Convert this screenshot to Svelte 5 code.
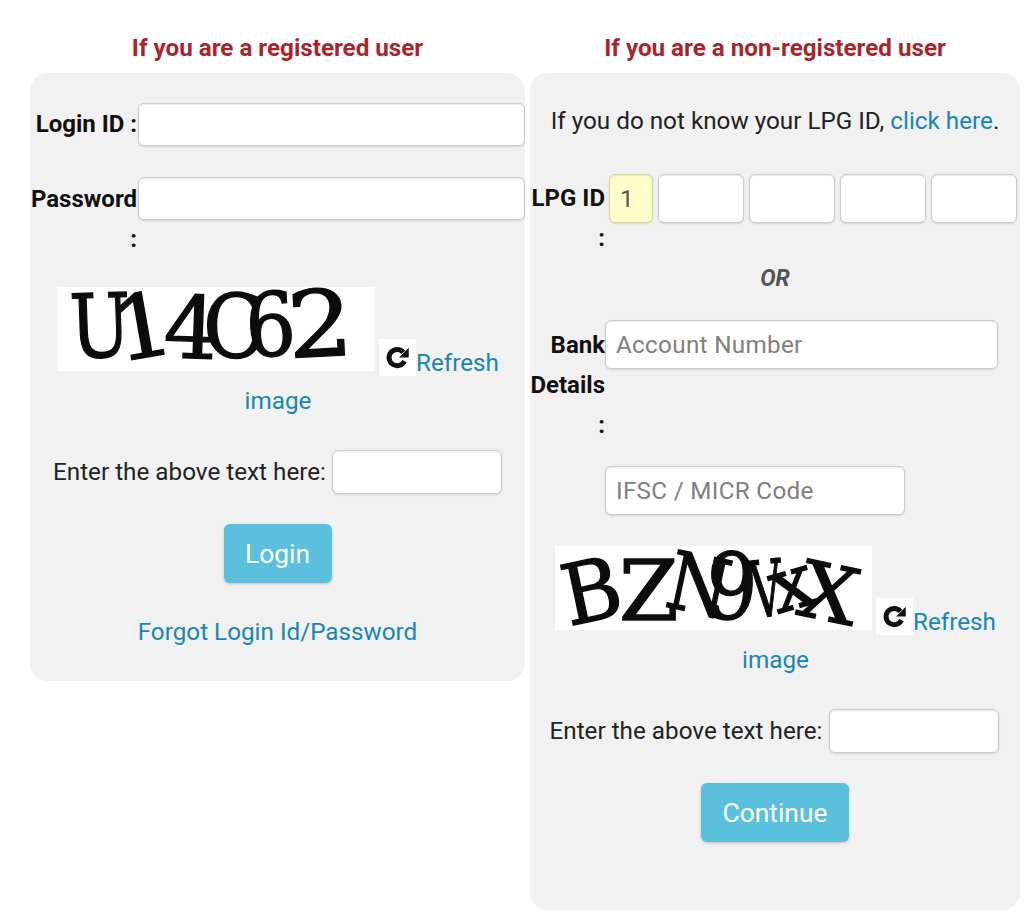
<script>
  const lpg = ['', '', '', ''];
  const cap1 = [
    ['U', 14, 71, 88, -2, .82], ['1', 62, 75, 88, -10, 1.05], ['4', 106, 70, 86, 2, 1],
    ['C', 146, 71, 88, 0, .92], ['6', 190, 70, 88, -3, .9], ['2', 232, 71, 92, -3, 1.12]
  ];
  const cap2 = [
    ['B', 14, 80, 84, -12, .95], ['Z', 64, 74, 84, 0, 1.02], ['N', 108, 60, 80, 12, .88],
    ['9', 150, 72, 92, 2, .88], ['V', 198, 72, 78, -6, .58], ['x', 222, 68, 74, -16, 1.05], ['X', 240, 68, 78, 12, 1.05]
  ];
</script>

{#snippet captcha(chars, w, h)}
  <svg class="cap" width={w} height={h} viewBox="0 0 {w} {h}" role="img" aria-label="captcha">
    {#each chars as [c, x, y, size, rot, sx]}
      <text transform="translate({x} {y}) rotate({rot}) scale({sx} 1)" font-size={size}>{c}</text>
    {/each}
  </svg>
{/snippet}

{#snippet refresh()}
  <span class="ricon">
    <svg width="27" height="27" viewBox="0 0 24 24" aria-hidden="true">
      <path d="M18.2 15.2A7.2 7.2 0 1 1 17.2 7.4" fill="none" stroke="#111" stroke-width="4.4"/>
      <path d="M22 3.4V12H13.4Z" fill="#111"/>
    </svg>
  </span>
{/snippet}

<main class="page">
  <section class="col left">
    <h2>If you are a registered user</h2>
    <div class="panel">
      <div class="row r1">
        <label class="lab" for="login">Login ID :</label>
        <input id="login" class="inp grow" type="text" />
      </div>
      <div class="row r2">
        <label class="lab" for="pw">Password :</label>
        <input id="pw" class="inp grow" type="password" />
      </div>
      <div class="capwrap c1">{@render captcha(cap1, 318, 84)}{@render refresh()}<a href="#r" class="link">Refresh image</a></div>
      <div class="enter e1">
        <span>Enter the above text here:</span>
        <input class="inp small" type="text" />
      </div>
      <div class="center"><button class="btn b1">Login</button></div>
      <div class="center forgot"><a href="#f" class="link">Forgot Login Id/Password</a></div>
    </div>
  </section>

  <section class="col right">
    <h2>If you are a non-registered user</h2>
    <div class="panel pr">
      <p class="know">If you do not know your LPG ID, <a href="#c" class="link">click here</a>.</p>
      <div class="row r3">
        <label class="lab lab2" for="l1">LPG ID :</label>
        <div class="boxes">
          <input id="l1" class="inp box first" type="text" value="1" />
          {#each lpg as v}
            <input class="inp box" type="text" value={v} />
          {/each}
        </div>
      </div>
      <div class="or">OR</div>
      <div class="row r4">
        <label class="lab lab2 bank" for="acct">Bank Details :</label>
        <div class="stack">
          <input id="acct" class="inp acct" type="text" placeholder="Account Number" />
          <input class="inp ifsc" type="text" placeholder="IFSC / MICR Code" />
        </div>
      </div>
      <div class="capwrap c2">{@render captcha(cap2, 317, 84)}{@render refresh()}<a href="#r" class="link">Refresh image</a></div>
      <div class="enter e2">
        <span>Enter the above text here:</span>
        <input class="inp small" type="text" />
      </div>
      <div class="center"><button class="btn b2">Continue</button></div>
    </div>
  </section>
</main>

<style>
  :global(body) { margin: 0; background: #fff; }
  .page {
    width: 1024px; height: 914px; box-sizing: border-box; overflow: hidden;
    display: flex; gap: 5px; padding: 0 4px 0 30px;
    font-family: Roboto, "Liberation Sans", sans-serif; font-size: 24.25px; line-height: 40px; color: #222;
  }
  .left { width: 495px; }
  .right { width: 490px; }
  h2 {
    margin: 0; padding-top: 34px; height: 39px; line-height: 29px; box-sizing: content-box;
    text-align: center; color: #a5272d; font-size: 24.2px; font-weight: 700;
  }
  .panel { background: #f1f1f1; border-radius: 18px; height: 608px; box-sizing: border-box; overflow: hidden; padding-top: 30px; }
  .pr { height: 837px; padding-top: 28px; }
  .row { display: flex; align-items: flex-start; }
  .lab { width: 107px; flex: none; font-weight: 700; text-align: right; color: #111; font-size: 24px; padding-top: 1px; }
  .r2 .lab { padding-top: 2px; }
  .lab2 { width: 75px; padding-top: 4px; }
  .bank { padding-top: 5px; }
  .inp {
    box-sizing: border-box; display: block; border: 1px solid #ccc; border-radius: 6px; background: #fff;
    font: inherit; letter-spacing: .3px; color: #555; outline: none; padding: 0 10px; min-width: 0;
    box-shadow: inset 0 1px 1px rgba(0,0,0,.08), 0 1px 2px rgba(0,0,0,.12);
  }
  .inp::placeholder { color: #808080; opacity: 1; }
  .grow { flex: 1; height: 43px; margin-left: 1px; }
  .r2 { margin-top: 31px; }
  .capwrap { text-align: center; line-height: 38px; padding-left: 1px; }
  .c1 { margin-top: 28px; }
  .c2 { margin-top: 31px; }
  .cap { display: inline-block; vertical-align: baseline; background: #fff; font-family: "DejaVu Serif", serif; fill: #0c0c0c; stroke: #0c0c0c; stroke-width: 1.4; }
  .ricon { display: inline-flex; width: 37px; height: 37px; background: #fff; align-items: center; justify-content: center; margin: 0 0 0 4px; vertical-align: baseline; }
  .link { color: #1a86b0; text-decoration: none; }
  .enter { display: flex; align-items: center; justify-content: center; gap: 6px; }
  .small { width: 170px; height: 44px; }
  .e1 { margin-top: 30px; }
  .e2 { margin-top: 30px; padding-right: 2px; }
  .center { text-align: center; }
  .btn {
    border: 0; border-radius: 6px; background: #5bc0de; color: #fff; font: inherit; font-size: 26.4px; height: 59px; padding: 0;
    box-shadow: 0 1px 3px rgba(0,0,0,.2);
  }
  .b1 { width: 108px; margin-top: 30px; }
  .b2 { width: 148px; margin-top: 30px; }
  .forgot { margin-top: 29px; }
  .know { margin: 0; text-align: center; height: 73px; }
  .boxes { display: flex; gap: 5px; margin-left: 4px; }
  .box { width: 86px; height: 49px; }
  .first { width: 44px; background: #ffffcc; border-color: #d5d8a0; }
  .or { text-align: center; font-weight: 700; font-style: italic; color: #555; font-size: 23px; margin-top: 1px; height: 40px; }
  .r4 { margin-top: 21px; }
  .stack { display: flex; flex-direction: column; gap: 97px; }
  .acct { width: 393px; height: 49px; }
  .ifsc { width: 300px; height: 49px; }
</style>
